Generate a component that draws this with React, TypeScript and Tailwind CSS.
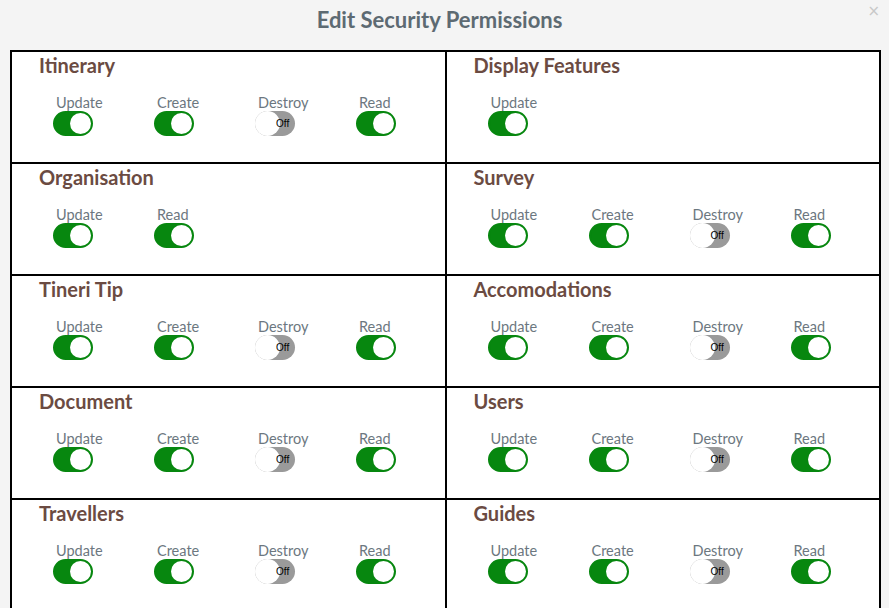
import React from "react";

type Perm = { label: string; on: boolean };

interface Section {
  title: string;
  perms: Perm[];
}

const full: Perm[] = [
  { label: "Update", on: true },
  { label: "Create", on: true },
  { label: "Destroy", on: false },
  { label: "Read", on: true },
];

const sections: Section[] = [
  { title: "Itinerary", perms: full },
  { title: "Display Features", perms: [{ label: "Update", on: true }] },
  {
    title: "Organisation",
    perms: [
      { label: "Update", on: true },
      { label: "Read", on: true },
    ],
  },
  { title: "Survey", perms: full },
  { title: "Tineri Tip", perms: full },
  { title: "Accomodations", perms: full },
  { title: "Document", perms: full },
  { title: "Users", perms: full },
  { title: "Travellers", perms: full },
  { title: "Guides", perms: full },
];

function Toggle({ on }: { on: boolean }) {
  if (on) {
    return (
      <div className="flex h-[25px] w-[40px] shrink-0 items-center justify-end rounded-full border-2 border-[#07870f] bg-[#07870f]">
        <div className="h-[21px] w-[21px] rounded-full bg-white" />
      </div>
    );
  }
  return (
    <div className="flex h-[25px] w-[40px] shrink-0 items-center rounded-full bg-[#9a9a9a]">
      <div className="h-[25px] w-[25px] shrink-0 rounded-full bg-white" />
      <span className="ml-[-4px] text-[10px] leading-none text-black [font-family:'Liberation_Sans',Arial,sans-serif]">
        Off
      </span>
    </div>
  );
}

function Cell({ section }: { section: Section }) {
  return (
    <div className="h-[112px] overflow-hidden border-b-2 border-r-2 border-black bg-white px-[27px]">
      <h3 className="text-[20px] font-bold leading-[26px] text-[#6b4b42]">{section.title}</h3>
      <div className="ml-[14px] mt-[16px] flex">
        {section.perms.map((p) => (
          <div key={p.label} className="w-[101px] shrink-0">
            <div className="pl-[3px] text-[14.5px] leading-[17px] text-[#6c7780]">{p.label}</div>
            <Toggle on={p.on} />
          </div>
        ))}
      </div>
    </div>
  );
}

export default function App() {
  return (
    <div className="relative h-[608px] w-[889px] overflow-hidden bg-[#f4f4f4] [font-family:Lato,'Noto_Sans',sans-serif]">
      <div className="flex h-[50px] items-center justify-center pb-[12px] pr-[10px]">
        <h1 className="text-[22px] font-bold text-[#5d6a72]">Edit Security Permissions</h1>
      </div>
      <span className="absolute right-[9px] top-[0px] text-[15px] text-[#c8c8c8] [font-family:'DejaVu_Sans',sans-serif]">
        ×
      </span>
      <div className="ml-[10px] grid w-[871px] grid-cols-2 border-l-2 border-t-2 border-black">
        {sections.map((s) => (
          <Cell key={s.title} section={s} />
        ))}
      </div>
    </div>
  );
}
